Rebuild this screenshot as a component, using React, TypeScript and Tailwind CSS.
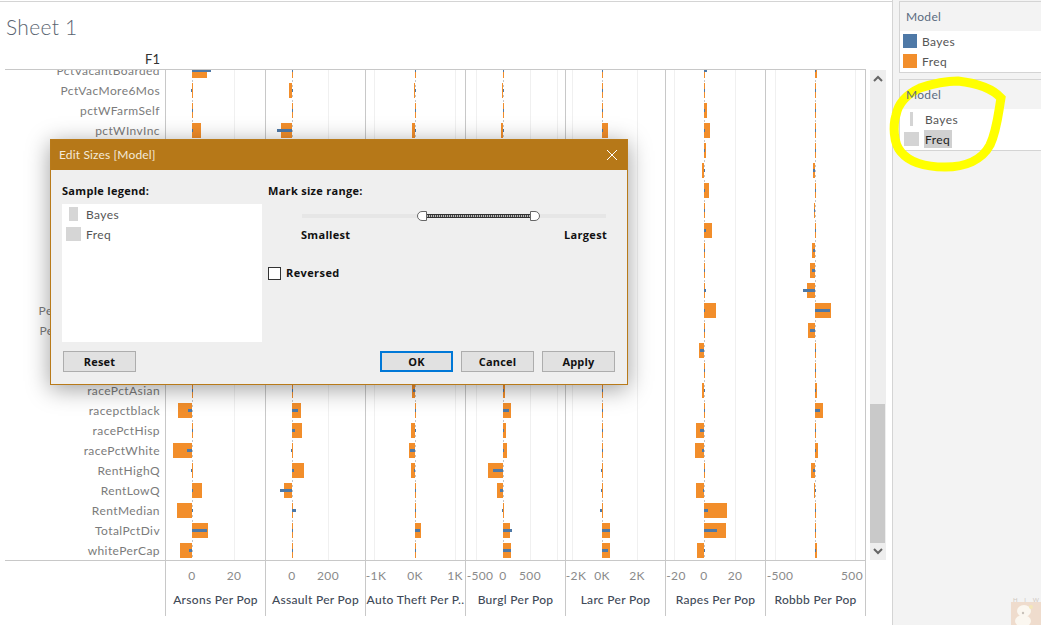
import React from "react";

type Bar = [number, number];
const labels = [
  "PctVacantBoarded","PctVacMore6Mos","pctWFarmSelf","pctWInvInc","pctWPubAsst","pctWRetire","pctWSocSec","pctWWage",
  "PctWOFullPlumb","PctWorkMom","PersPerFam","PersPerOccupHous","PersPerOwnOccHous","PersPerRentOccHous","PopDens","population",
  "racePctAsian","racepctblack","racePctHisp","racePctWhite","RentHighQ","RentLowQ","RentMedian","TotalPctDiv","whitePerCap",
];

const one: Bar = [1, 1];
const cols: { name: string; zero: number; grid: number[]; ticks: [number, string][]; bars: Bar[] }[] = [
  { name: "Arsons Per Pop", zero: 27, grid: [69], ticks: [[27, "0"], [69, "20"]],
    bars: [[15, 19], [1, -1], one, [9, 1], one, one, one, one, one, one, one, one, one, one, one, one, one, [-14, -4], one, [-19, -5], [1, -1], [10, 1], [-15, 1], [16, 15], [-12, -3]] },
  { name: "Assault Per Pop", zero: 27, grid: [63], ticks: [[27, "0"], [63, "200"]],
    bars: [one, [-3, 1], one, [-11, -15], one, one, one, one, one, one, one, one, one, one, one, one, one, [9, 6], [10, 3], [1, -1], [12, 2], [-8, -12], [1, 4], one, one] },
  { name: "Auto Theft Per P..", zero: 50, grid: [9, 90], ticks: [[11, "-1K"], [50, "0K"], [90, "1K"]],
    bars: [one, [-1, 1], one, [-3, 1], one, one, one, one, one, one, one, one, one, one, one, one, [-3, -2], one, [-4, 1], [-6, -5], [-4, -1], one, one, [6, 5], one] },
  { name: "Burgl Per Pop", zero: 38, grid: [11, 65, 92], ticks: [[15, "-500"], [38, "0"], [65, "500"]],
    bars: [one, [-1, 1], one, [-2, 1], one, one, one, one, one, one, one, one, one, one, one, one, [2, 1], [8, 6], [3, 1], [4, 1], [-15, -10], [-6, -3], [1, -1], [7, 9], [8, 8]] },
  { name: "Larc Per Pop", zero: 37, grid: [7, 72], ticks: [[11, "-2K"], [37, "0K"], [72, "2K"]],
    bars: [one, one, one, [6, 1], one, one, one, one, one, one, one, one, one, one, one, one, one, one, one, one, [1, -1], [1, -1], [1, -2], [8, 8], [8, 6]] },
  { name: "Rapes Per Pop", zero: 39, grid: [9, 70], ticks: [[11, "-20"], [39, "0"], [70, "20"]],
    bars: [[1, 3], one, [3, 1], [6, 1], [2, 1], [-2, 1], [5, 1], one, [8, 2], one, one, [1, 2], [12, 1], one, [-5, -4], one, [-2, 1], one, [-8, -4], [-9, -2], one, [-8, -1], [23, 4], [22, 13], [-7, 1]] },
  { name: "Robbb Per Pop", zero: 50, grid: [10, 90], ticks: [[15, "-500"], [87, "500"]],
    bars: [[2, 1], one, one, one, one, [-2, -2], one, [-1, -1], one, [-3, -2], [-5, -3], [-8, -12], [16, 15], [-7, -5], one, one, [2, 1], [8, 5], one, [3, 1], [-4, -2], [-1, 1], one, one, [2, 1]] },
];

function Pane({ col }: { col: (typeof cols)[number] }) {
  return (
    <div className="w-[100px] h-[490px] border-l border-[#c8c8c8] overflow-hidden">
      <svg width="99" height="490" viewBox="1 0 99 490" shapeRendering="crispEdges" className="block">
        {col.grid.map((g) => (
          <rect key={g} x={g} y={0} width={1} height={490} fill="#f0f0f0" />
        ))}
        <line x1={col.zero + 0.5} x2={col.zero + 0.5} y1={0} y2={490} stroke="#c4c4c4" strokeDasharray="2 3" />
        {col.bars.map(([o, b], i) => {
          const top = 20 * i - 7;
          return (
            <g key={i}>
              <rect x={o < 0 ? col.zero + o : col.zero} y={top} width={Math.abs(o)} height={15} fill="#f28e2b" />
              <rect x={b < 0 ? col.zero + b : col.zero} y={top + 6} width={Math.abs(b)} height={3} fill="#4e79a7" />
            </g>
          );
        })}
      </svg>
    </div>
  );
}

function Axis({ col }: { col: (typeof cols)[number] }) {
  return (
    <div className="w-[100px] h-[55px] border-l border-[#c8c8c8] flex flex-col">
      <svg width="99" height="30" viewBox="1 0 99 30" className="block shrink-0 text-[12px] fill-[#8a8a8a] tracking-[0.3px]">
        {col.ticks.map(([x, t]) => (
          <text key={t} x={x} y={19} textAnchor="middle">{t}</text>
        ))}
      </svg>
      <div className="text-center text-[12px] leading-[16px] mt-[1px] tracking-[0.3px] text-[#3f4a58] whitespace-nowrap font-medium">{col.name}</div>
    </div>
  );
}

function DialogButton({ label, primary }: { label: string; primary?: boolean }) {
  return (
    <div
      className={
        "w-[73px] h-[21px] flex items-center justify-center pt-[1px] bg-[#e1e1e1] text-[11px] tracking-[0.2px] font-bold text-[#111] " +
        (primary ? "border-2 border-[#0078d7]" : "border border-[#adadad]")
      }
    >
      {label}
    </div>
  );
}

function Dialog() {
  return (
    <div className="absolute left-[50px] top-[139px] w-[578px] h-[246px] border border-[#b87a1a] bg-[#efefef] shadow-[0_4px_22px_rgba(0,0,0,0.38)] flex flex-col font-['Open_Sans',sans-serif]">
      <div className="h-[30px] bg-[#b67818] flex items-center justify-between pl-[8px] pr-[9px] shrink-0">
        <span className="text-[12px] text-[#f4ead8] font-['Lato',sans-serif] tracking-[0.15px]">Edit Sizes [Model]</span>
        <svg width="12" height="12" viewBox="0 0 12 12" fill="none" stroke="#ffffff" strokeWidth="1">
          <path d="M1 1 L11 11 M11 1 L1 11" />
        </svg>
      </div>
      <div className="flex-1 flex flex-col pl-[11px] pr-[12px]">
        <div className="flex flex-1">
          <div className="w-[206px] shrink-0 flex flex-col">
            <div className="text-[11px] font-bold tracking-[0.3px] text-[#111] leading-[14px] mt-[14px] mb-[6px]">Sample legend:</div>
            <div className="w-[200px] h-[138px] bg-white font-['Lato',sans-serif] text-[12px] text-[#555] tracking-[0.4px] flex flex-col">
              <div className="flex items-center h-[14px] mt-[3px]">
                <span className="w-[9px] h-[14px] bg-[#d6d6d6] ml-[7px]" />
                <span className="ml-[8px] mt-[2px]">Bayes</span>
              </div>
              <div className="flex items-center h-[14px] mt-[6px]">
                <span className="w-[15px] h-[14px] bg-[#d6d6d6] ml-[4px]" />
                <span className="ml-[5px] mt-[2px]">Freq</span>
              </div>
            </div>
          </div>
          <div className="flex-1 flex flex-col">
            <div className="text-[11px] font-bold tracking-[0.3px] text-[#111] leading-[14px] mt-[14px]">Mark size range:</div>
            <div className="relative ml-[34px] w-[304px] h-[4px] mt-[16px] bg-[#e6e6e6]">
              <div className="absolute left-[124px] top-0 w-[104px] h-[4px] border-y border-[#333] bg-[repeating-linear-gradient(90deg,#444_0,#444_1px,#bbb_1px,#bbb_2px)]" />
              <div className="absolute left-[115px] -top-[3px] w-[10px] h-[10px] bg-white border border-[#666] rounded-l-full" />
              <div className="absolute left-[228px] -top-[3px] w-[10px] h-[10px] bg-white border border-[#666] rounded-r-full" />
            </div>
            <div className="flex justify-between ml-[33px] w-[306px] text-[11px] font-bold tracking-[0.3px] text-[#111] leading-[14px] mt-[10px]">
              <span>Smallest</span>
              <span>Largest</span>
            </div>
            <div className="flex items-center mt-[23px]">
              <span className="w-[13px] h-[13px] bg-white border border-[#333]" />
              <span className="ml-[5px] text-[11px] font-bold tracking-[0.4px] text-[#111]">Reversed</span>
            </div>
          </div>
        </div>
        <div className="flex items-start h-[33px] shrink-0 pl-[1px]">
          <DialogButton label="Reset" />
          <div className="flex-1" />
          <div className="flex gap-[8px]">
            <DialogButton label="OK" primary />
            <DialogButton label="Cancel" />
            <DialogButton label="Apply" />
          </div>
        </div>
      </div>
    </div>
  );
}

function LegendCard({ highlight }: { highlight?: boolean }) {
  return (
    <div className="h-[72px] border border-[#d4d4d4] border-r-0 flex flex-col">
      <div className="h-[29px] shrink-0 pl-[6px] flex items-center text-[12px] text-[#5b6b80] tracking-[0.3px] relative z-10">Model</div>
      <div className="flex-1 bg-white text-[12px] text-[#555] tracking-[0.4px]">
        {highlight ? (
          <>
            <div className="flex items-center h-[14px] mt-[3px]">
              <span className="w-[3px] h-[14px] bg-[#d4d4d4] ml-[10px]" />
              <span className="ml-[12px] mt-[2px]">Bayes</span>
            </div>
            <div className="flex items-center h-[18px] mt-[4px]">
              <span className="w-[15px] h-[14px] bg-[#d4d4d4] ml-[4px]" />
              <span className="ml-[5px] w-[28px] h-[18px] bg-[#d0d0d0] text-[#222] leading-[20px] pl-[1px]">Freq</span>
            </div>
          </>
        ) : (
          <>
            <div className="flex items-center h-[14px] mt-[3px]">
              <span className="w-[14px] h-[14px] bg-[#4e79a7] ml-[3px]" />
              <span className="ml-[5px] mt-[2px]">Bayes</span>
            </div>
            <div className="flex items-center h-[14px] mt-[6px]">
              <span className="w-[14px] h-[14px] bg-[#f28e2b] ml-[3px]" />
              <span className="ml-[5px] mt-[2px]">Freq</span>
            </div>
          </>
        )}
      </div>
    </div>
  );
}

export default function App() {
  return (
    <div className="relative w-[1041px] h-[625px] overflow-hidden flex bg-[#f3f3f3] font-['Lato',sans-serif]">
      <div className="w-[893px] h-[625px] shrink-0 bg-white border-r border-[#d4d4d4] flex flex-col pt-[1px]">
        <div className="h-[1px] bg-[#d4d4d4] shrink-0" />
        <div className="h-[50px] shrink-0 pl-[6px] pt-[11px] text-[21px] leading-[28px] font-light text-[#5a6470] tracking-[0.3px]">Sheet 1</div>
        <div className="h-[17px] shrink-0 w-[160px] text-right text-[13px] leading-[15px] text-[#333]">F1</div>
        <div className="flex pl-[5px] shrink-0">
          <div className="flex flex-col">
            <div className="flex border-y border-[#c8c8c8]">
              <div className="w-[160px] h-[490px] overflow-hidden pr-[5px]">
                <div className="-mt-[9px] flex flex-col">
                  {labels.map((l) => (
                    <div key={l} className="h-[20px] leading-[20px] text-right text-[12px] text-[#7b7b7b] tracking-[0.42px] whitespace-nowrap">{l}</div>
                  ))}
                </div>
              </div>
              {cols.map((c) => (
                <Pane key={c.name} col={c} />
              ))}
              <div className="w-[1px] bg-[#c8c8c8]" />
            </div>
            <div className="flex">
              <div className="w-[160px]" />
              {cols.map((c) => (
                <Axis key={c.name} col={c} />
              ))}
              <div className="w-[1px] h-[55px] bg-[#c8c8c8]" />
            </div>
          </div>
          <div className="ml-[4px] mt-[1px] w-[16px] h-[490px] bg-[#eeeeee] flex flex-col items-center">
            <svg width="12" height="14" viewBox="0 0 12 14" className="mt-[1px] shrink-0" fill="none" stroke="#666" strokeWidth="2">
              <path d="M2 10 L6 6 L10 10" />
            </svg>
            <div className="flex-1" />
            <div className="w-[15px] h-[139px] bg-[#c9c9c9] mr-[1px] shrink-0" />
            <svg width="12" height="17" viewBox="0 0 12 17" className="shrink-0" fill="none" stroke="#666" strokeWidth="2">
              <path d="M2 6 L6 10 L10 6" />
            </svg>
          </div>
        </div>
      </div>

      <div className="flex-1 pl-[6px] pt-[1px] flex flex-col gap-[6px] relative">
        <LegendCard />
        <LegendCard highlight />
      </div>

      <svg width="150" height="100" viewBox="885 75 150 100" className="absolute left-[885px] top-[75px]" fill="none" stroke="#ffff00" strokeWidth="9">
        <path d="M958 81 C975 83 992 88 1001 98 C998 115 997 130 990 145 C982 160 965 167 945 167 C925 167 910 163 901 152 C893 143 893 125 896 115 C898 105 905 95 920 88 C935 83 945 81 958 81 Z" />
      </svg>

      <div className="absolute left-[1011px] top-[597px] w-[30px] flex flex-col items-stretch">
        <div className="h-[5px] flex justify-between text-[6px] leading-[5px] text-[#cfc8c0] px-[2px] overflow-hidden">
          <span>H</span><span>I</span><span>W</span>
        </div>
        <svg width="30" height="23" viewBox="0 0 30 23" className="block">
          <rect width="30" height="23" fill="#efdccd" />
          <ellipse cx="13" cy="9" rx="7" ry="6" fill="#fbf7f0" />
          <ellipse cx="12" cy="19" rx="8" ry="6" fill="#fbf7f0" />
          <circle cx="20" cy="5" r="2" fill="#f3e7b8" />
          <circle cx="12" cy="11" r="1.2" fill="#c8c2ba" />
        </svg>
      </div>

      <Dialog />
    </div>
  );
}
